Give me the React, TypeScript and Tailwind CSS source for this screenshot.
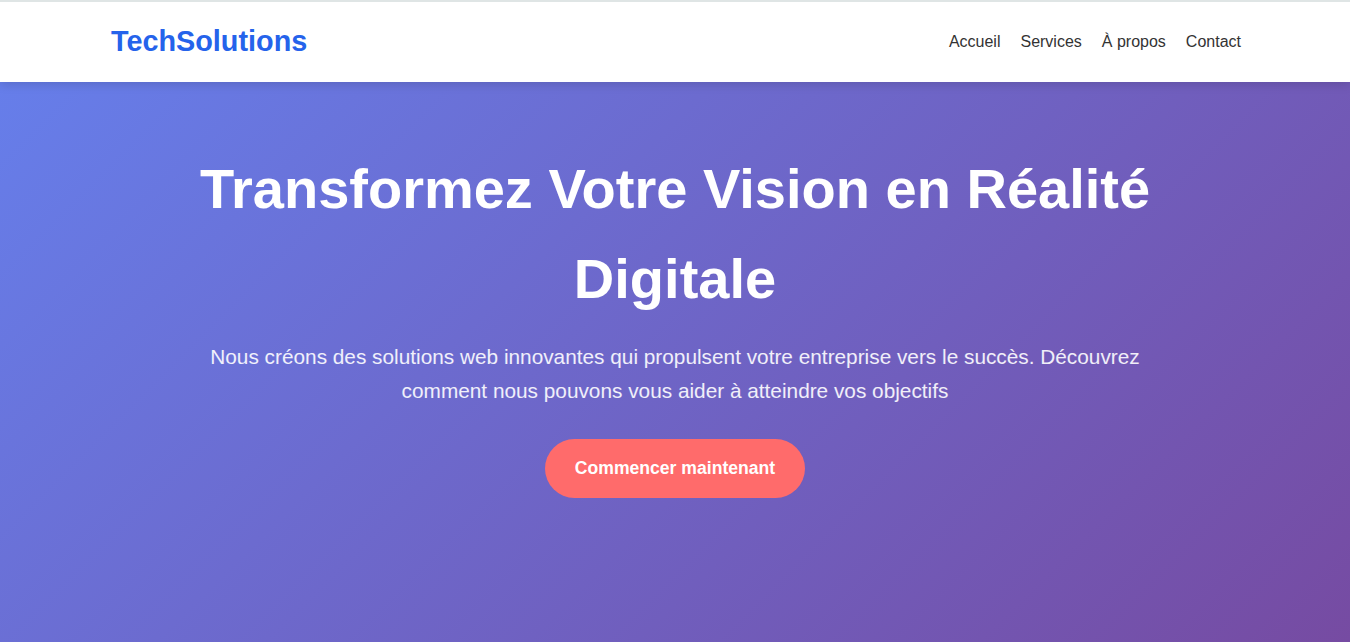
export default function App() {
  return (
    <div className="min-h-screen font-['Liberation_Sans',Arial,sans-serif]">
      <header className="relative z-10 bg-white border-t-2 border-[#dfe5e5] shadow-[0_2px_10px_rgba(0,0,0,0.15)]">
        <div className="max-w-[1130px] mx-auto h-[80px] pl-px flex justify-between items-center">
          <a href="#" className="text-[28.8px] font-bold text-[#2563eb]">
            TechSolutions
          </a>
          <nav className="flex items-center gap-5 text-[16px] text-[#333] translate-x-px">
            <a href="#">Accueil</a>
            <a href="#">Services</a>
            <a href="#">À propos</a>
            <a href="#">Contact</a>
          </nav>
        </div>
      </header>

      <section className="min-h-[560px] bg-[linear-gradient(135deg,#667eea_0%,#764ba2_100%)] text-white text-center pt-[62px] px-4">
        <div className="max-w-[1000px] mx-auto">
          <h1 className="text-[56px] font-bold leading-[1.6]">
            Transformez Votre Vision en Réalité Digitale
          </h1>
          <p className="mt-[17px] max-w-[960px] mx-auto text-[20.8px] leading-[34px] text-white/90">
            Nous créons des solutions web innovantes qui propulsent votre entreprise vers le succès. Découvrez comment nous pouvons vous aider à atteindre vos objectifs
          </p>
          <button className="mt-[31px] h-[59px] px-[30px] rounded-full bg-[#ff6b6b] text-white text-[17.6px] font-bold">
            Commencer maintenant
          </button>
        </div>
      </section>
    </div>
  );
}
